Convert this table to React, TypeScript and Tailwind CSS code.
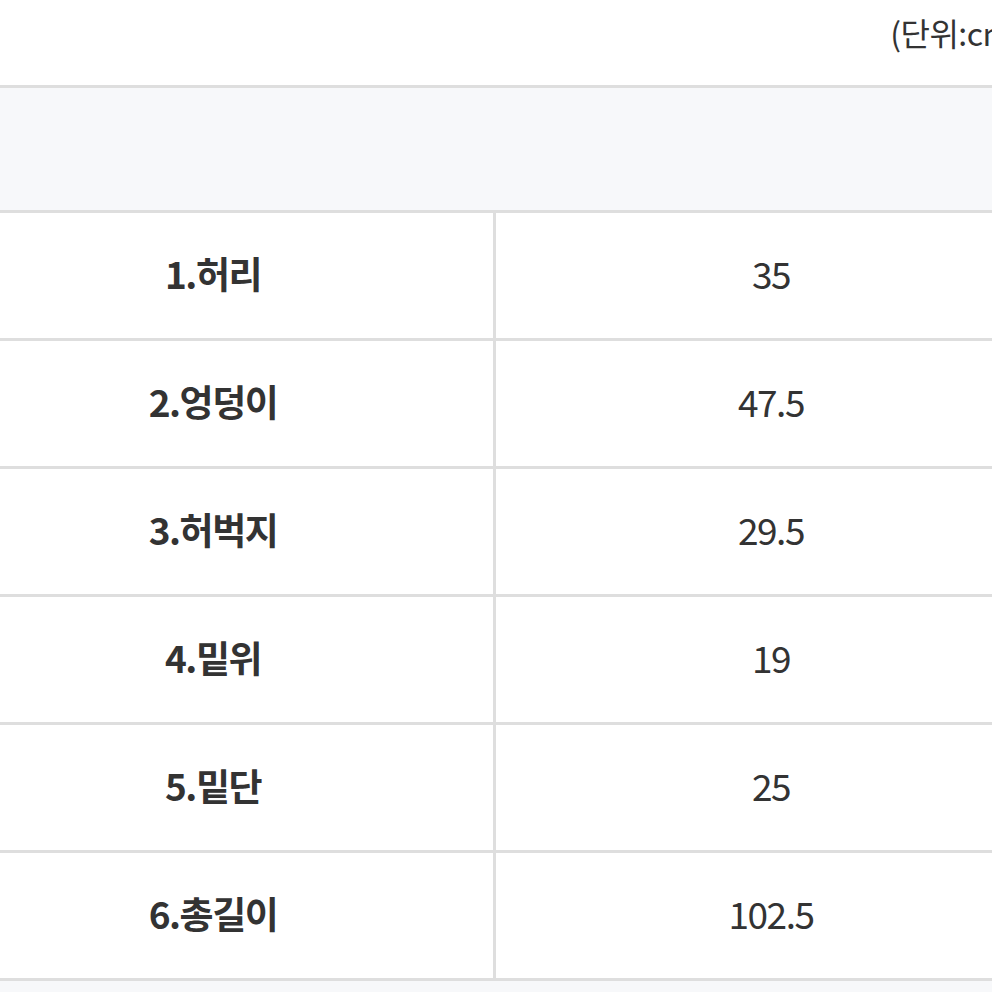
const rows = [
  { label: "1.허리", value: "35" },
  { label: "2.엉덩이", value: "47.5" },
  { label: "3.허벅지", value: "29.5" },
  { label: "4.밑위", value: "19" },
  { label: "5.밑단", value: "25" },
  { label: "6.총길이", value: "102.5" },
];

export default function App() {
  return (
    <div
      className="w-[992px] h-[992px] overflow-hidden bg-white text-[#333333]"
      style={{ fontFamily: '"Noto Sans CJK KR", "Noto Sans", sans-serif' }}
    >
      <div className="ml-[-67px] w-[1113px]">
        <div className="h-[85px] flex justify-end pr-[24px] pt-[11px]">
          <p className="text-[32px] leading-[42px] whitespace-nowrap tracking-[-0.5px]">(단위:cm)</p>
        </div>
        <div className="border-y-[3px] border-[#dedede] bg-[#f7f8fa] h-[128px]"></div>
        {rows.map((row) => (
          <div key={row.label} className="grid grid-cols-[560px_3px_1fr] h-[128px] border-b-[3px] border-[#dedede]">
            <div className="flex items-center justify-center text-[37px] font-bold tracking-[-1.5px] pb-[4px]">
              {row.label}
            </div>
            <div className="bg-[#dedede]"></div>
            <div className="flex items-center justify-center text-[37px] tracking-[-1.5px] pb-[4px]">
              {row.value}
            </div>
          </div>
        ))}
        <div className="bg-[#f7f8fa] h-[128px]"></div>
      </div>
    </div>
  );
}
